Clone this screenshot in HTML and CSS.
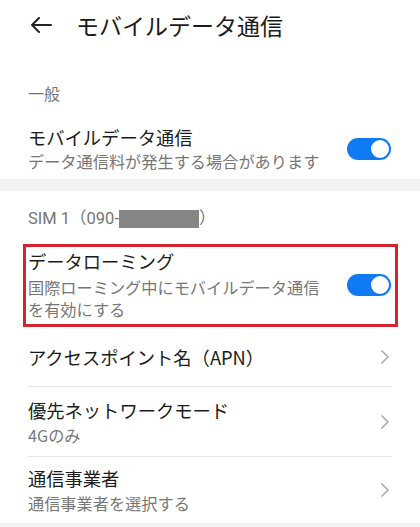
FILE: index.html
```html
<!DOCTYPE html>
<html lang="ja">
<head>
<meta charset="utf-8">
<link rel="stylesheet" href="styles.css">
</head>
<body>
<div class="screen">
  <header class="header">
    <svg class="back" width="22" height="16" viewBox="0 0 22 16"><path d="M21 8H2M9 1L2 8l7 7" fill="none" stroke="#222" stroke-width="2" stroke-linecap="round" stroke-linejoin="round"/></svg>
    <h1 class="title">モバイルデータ通信</h1>
  </header>

  <div class="label label-general">一般</div>
  <div class="row row-mobile">
    <div class="text">
      <div class="main">モバイルデータ通信</div>
      <div class="sub">データ通信料が発生する場合があります</div>
    </div>
    <div class="toggle"><span class="knob"></span></div>
  </div>

  <div class="band"></div>

  <div class="label label-sim">SIM 1（090-<span class="mask"></span>）</div>

  <div class="row row-roaming">
    <div class="text narrow">
      <div class="main">データローミング</div>
      <div class="sub">国際ローミング中にモバイルデータ通信を有効にする</div>
    </div>
    <div class="toggle"><span class="knob"></span></div>
  </div>

  <div class="row row-apn">
    <div class="text"><div class="main">アクセスポイント名（APN）</div></div>
    <svg class="chev" width="10" height="16" viewBox="0 0 10 16"><path d="M1.5 1.5L8 8l-6.5 6.5" fill="none" stroke="#ababab" stroke-width="1.6"/></svg>
  </div>
  <div class="divider"></div>
  <div class="row row-net">
    <div class="text">
      <div class="main">優先ネットワークモード</div>
      <div class="sub">4Gのみ</div>
    </div>
    <svg class="chev" width="10" height="16" viewBox="0 0 10 16"><path d="M1.5 1.5L8 8l-6.5 6.5" fill="none" stroke="#ababab" stroke-width="1.6"/></svg>
  </div>
  <div class="divider"></div>
  <div class="row row-carrier">
    <div class="text">
      <div class="main">通信事業者</div>
      <div class="sub">通信事業者を選択する</div>
    </div>
    <svg class="chev" width="10" height="16" viewBox="0 0 10 16"><path d="M1.5 1.5L8 8l-6.5 6.5" fill="none" stroke="#ababab" stroke-width="1.6"/></svg>
  </div>
  <div class="band band-bottom"></div>
</div>
</body>
</html>
```

FILE: styles.css
```css
html, body {
  margin: 0;
  padding: 0;
  background: #ffffff;
}
body {
  font-family: "Noto Sans CJK JP", "Noto Sans", Roboto, sans-serif;
  color: #1b1b1b;
  width: 420px;
  height: 527px;
  overflow: hidden;
}
.screen {
  display: flex;
  flex-direction: column;
}
.header {
  height: 50px;
  display: flex;
  align-items: center;
  padding-left: 30px;
}
.back {
  flex: none;
}
.title {
  margin: 0 0 0 24px;
  font-size: 23px;
  font-weight: 400;
  line-height: 30px;
  color: #1b1b1b;
}
.label {
  font-size: 16px;
  line-height: 20px;
  color: #757575;
  padding-left: 28px;
  display: flex;
  align-items: center;
}
.label-general {
  margin-top: 33px;
}
.label-sim {
  margin-top: 18px;
  font-family: Roboto, "Noto Sans CJK JP", sans-serif;
  font-size: 16.5px;
}
.mask {
  display: inline-block;
  width: 80px;
  height: 18px;
  background: #858585;
}
.row {
  display: flex;
  align-items: center;
  padding: 0 29px 0 28px;
}
.text {
  flex: 1;
  min-width: 0;
}
.narrow {
  flex: none;
  width: 302px;
}
.main {
  font-size: 18.3px;
  line-height: 24px;
  color: #1b1b1b;
}
.sub {
  font-size: 16.2px;
  line-height: 22px;
  color: #777777;
  margin-top: 2px;
}
.row-mobile {
  padding-top: 22px;
  padding-bottom: 7px;
}
.row-mobile .sub {
  margin-top: 1px;
}
.toggle {
  margin-left: auto;
  flex: none;
  width: 44px;
  height: 22px;
  border-radius: 11px;
  background: #0f7af2;
  display: flex;
  align-items: center;
  justify-content: flex-end;
  padding-right: 2px;
  box-sizing: border-box;
}
.knob {
  width: 18px;
  height: 18px;
  border-radius: 50%;
  background: #ffffff;
}
.band {
  height: 12px;
  background: #f3f3f3;
}
.row-roaming {
  margin: 15px 22px 0 23px;
  border: 3px solid #d3242f;
  padding: 2px 4px 4px 2px;
}
.row-roaming .sub {
  margin-top: 3px;
}
.row-apn {
  height: 59px;
}
.divider {
  height: 1px;
  background: #e6e6e6;
  margin: 0 28px;
}
.row-net {
  height: 69px;
}
.row-carrier {
  height: 66px;
}
.chev {
  flex: none;
  margin-left: auto;
  margin-right: 1px;
}
.band-bottom {
  height: 10px;
}
```
